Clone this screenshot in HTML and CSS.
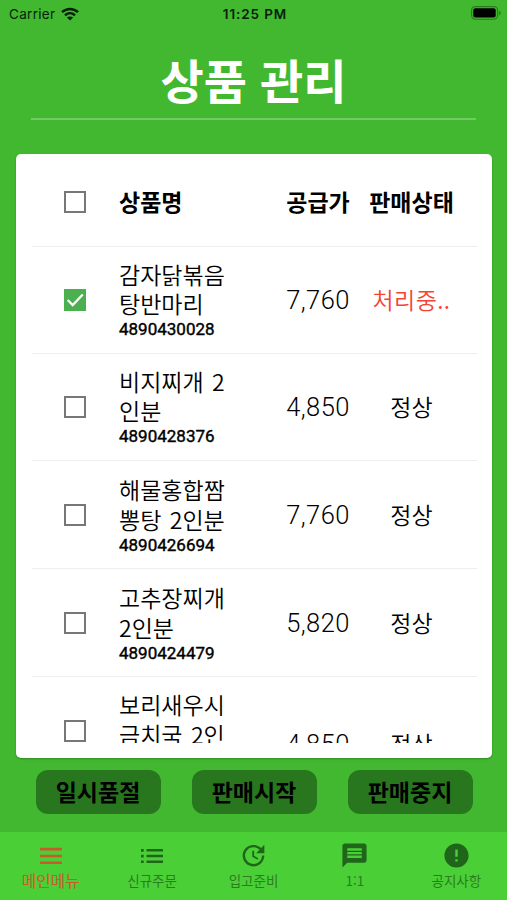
FILE: index.html
```html
<!DOCTYPE html>
<html lang="ko">
<head>
    <meta charset="UTF-8">
    <meta name="viewport" content="width=device-width, initial-scale=1.0">
    <title>상품 관리</title>
    <link rel="stylesheet" href="styles.css">
</head>
<body>
    <div class="status-bar">
        <div class="carrier">
            <span>Carrier</span>
            <svg class="wifi" viewBox="0 0 18 14" fill="none" stroke="#06210a" stroke-width="2.5">
                <path d="M1 5.1C5.6.8 12.4.8 17 5.1"/>
                <path d="M4 8.3c2.9-2.7 7.1-2.7 10 0"/>
                <path d="M9 13.6L5.9 10.6c1.8-1.6 4.4-1.6 6.2 0z" fill="#06210a" stroke="none"/>
            </svg>
        </div>
        <div class="time">11:25 PM</div>
        <svg class="battery" viewBox="0 0 30 14">
            <rect x=".6" y=".6" width="26" height="12.6" rx="3.6" fill="none" stroke="#2a7a20" stroke-width="1.1"/>
            <rect x="2.3" y="2.3" width="22.4" height="9.2" rx="2" fill="#000"/>
            <path d="M28 4.8c2.2.8 2.2 3.6 0 4.4z" fill="#2a7a20"/>
        </svg>
    </div>

    <h1 class="title">상품 관리</h1>

    <div class="card">
        <div class="list">
            <div class="row header">
                <span class="checkbox"></span>
                <div>상품명</div>
                <div class="price">공급가</div>
                <div class="state">판매상태</div>
            </div>
            <div class="row">
                <span class="checkbox checked">
                    <svg viewBox="0 0 24 24"><path d="M4 12l5.5 5.5L20.5 6" fill="none" stroke="#fff" stroke-width="2.5"/></svg>
                </span>
                <div class="name">감자닭볶음<br>탕반마리<small>4890430028</small></div>
                <div class="price">7,760</div>
                <div class="state pending">처리중..</div>
            </div>
            <div class="row">
                <span class="checkbox"></span>
                <div class="name">비지찌개 2<br>인분<small>4890428376</small></div>
                <div class="price">4,850</div>
                <div class="state">정상</div>
            </div>
            <div class="row tall">
                <span class="checkbox"></span>
                <div class="name">해물홍합짬<br>뽕탕 2인분<small>4890426694</small></div>
                <div class="price">7,760</div>
                <div class="state">정상</div>
            </div>
            <div class="row tall">
                <span class="checkbox"></span>
                <div class="name">고추장찌개<br>2인분<small>4890424479</small></div>
                <div class="price">5,820</div>
                <div class="state">정상</div>
            </div>
            <div class="row tall last">
                <span class="checkbox"></span>
                <div class="name">보리새우시<br>금치국 2인</div>
                <div class="price">4,850</div>
                <div class="state">정상</div>
            </div>
        </div>
    </div>

    <div class="actions">
        <button>일시품절</button>
        <button>판매시작</button>
        <button>판매중지</button>
    </div>

    <nav class="tabs">
        <a class="tab active">
            <svg viewBox="0 0 24 24"><path d="M1 3.8h22v2.7H1zM1 10.7h22v2.6H1zM1 17.4h22v2.7H1z"/></svg>
            <span>메인메뉴</span>
        </a>
        <a class="tab">
            <svg viewBox="0 0 24 24"><path d="M1 5h2.7v2.7H1zM1 10.7h2.7v2.7H1zM1 16.4h2.7v2.7H1zM6.5 5H23v2.6H6.5zM6.5 10.7H23v2.6H6.5zM6.5 16.4H23V19H6.5z"/></svg>
            <span>신규주문</span>
        </a>
        <a class="tab">
            <svg class="big" viewBox="0 0 24 24"><path d="M21 10.12h-6.78l2.74-2.82c-2.73-2.7-7.15-2.8-9.88-.1-2.73 2.71-2.73 7.08 0 9.79s7.15 2.71 9.88 0C18.32 15.65 19 14.08 19 12.1h2c0 1.98-.88 4.55-2.64 6.29-3.51 3.48-9.21 3.48-12.72 0-3.5-3.47-3.53-9.11-.02-12.58s9.14-3.47 12.65 0L21 3v7.12zM12.5 8v4.25l3.5 2.08-.72 1.21L11 13V8h1.5z"/></svg>
            <span>입고준비</span>
        </a>
        <a class="tab">
            <svg class="big" viewBox="0 0 24 24"><path d="M20 2H4c-1.1 0-1.99.9-1.99 2L2 22l4-4h14c1.1 0 2-.9 2-2V4c0-1.1-.9-2-2-2zm-2 12H6v-2h12v2zm0-3H6V9h12v2zm0-3H6V6h12v2z"/></svg>
            <span>1:1</span>
        </a>
        <a class="tab">
            <svg class="big" viewBox="0 0 24 24"><path d="M12 2C6.48 2 2 6.48 2 12s4.48 10 10 10 10-4.48 10-10S17.52 2 12 2zm1 15h-2v-2h2v2zm0-4h-2V7h2v6z"/></svg>
            <span>공지사항</span>
        </a>
    </nav>
</body>
</html>
```

FILE: styles.css
```css
* {
    margin: 0;
    padding: 0;
    box-sizing: border-box;
}

body {
    font-family: "Noto Sans CJK KR", sans-serif;
    background: #42b830;
    width: 507px;
    height: 900px;
    overflow: hidden;
    display: flex;
    flex-direction: column;
    color: #000;
}

.status-bar {
    height: 27px;
    padding: 0 6px 0 9px;
    display: grid;
    grid-template-columns: 1fr auto 1fr;
    align-items: center;
    font-family: Inter, sans-serif;
    font-size: 13.5px;
    color: #06210a;
}

.carrier {
    display: flex;
    align-items: center;
    gap: 6px;
    letter-spacing: 0.3px;
}

.wifi {
    width: 18px;
    height: 14px;
}

.time {
    font-weight: 600;
    letter-spacing: 0.9px;
}

.battery {
    width: 30px;
    height: 14px;
    justify-self: end;
    margin-top: -2px;
}

.title {
    height: 93px;
    margin: 0 31px;
    padding-top: 16px;
    border-bottom: 2px solid #72cb65;
    font-size: 47px;
    line-height: 72px;
    text-align: center;
    color: #fff;
}

.card {
    height: 604px;
    margin: 34px 15px 0 16px;
    padding: 0 15px 15px 16px;
    background: #fff;
    border-radius: 5px;
    box-shadow: 0 1px 2px rgba(0, 0, 0, 0.25);
}

.list {
    height: 589px;
    overflow: hidden;
}

.row {
    display: grid;
    grid-template-columns: 55px 159px 80px 107px;
    align-items: center;
    height: 107px;
    padding-left: 32px;
    border-bottom: 1px solid #eee;
    font-size: 23px;
    font-weight: 350;
    line-height: 29px;
    word-spacing: 2px;
}

.row.header {
    height: 93px;
    padding-top: 5px;
    font-weight: 700;
}

.row.tall {
    height: 108px;
    line-height: 30px;
}

.row.last {
    height: 109px;
}

.row.last .name {
    padding-bottom: 24px;
}

.row.last .price,
.row.last .state {
    padding-top: 26px;
}

.checkbox {
    width: 22px;
    height: 22px;
    border: 2px solid #777;
}

.checkbox.checked {
    border: none;
    background: #4caf50;
}

.checkbox svg {
    display: block;
}

.name small {
    display: block;
    font-family: Roboto, sans-serif;
    font-size: 17px;
    font-weight: 400;
    -webkit-text-stroke: 0.4px #000;
    line-height: 22px;
}

.price,
.state {
    text-align: center;
    padding-bottom: 2px;
}

.price {
    font-size: 25.5px;
    font-weight: 300;
    font-family: Roboto, "Noto Sans CJK KR", sans-serif;
    letter-spacing: 0.4px;
    padding-bottom: 0;
}

.header .price {
    font-family: inherit;
    font-size: 23px;
    font-weight: 700;
    letter-spacing: 0;
    padding-bottom: 2px;
}

.row.header .checkbox {
    margin-top: -2px;
}

.row.header div {
    padding-bottom: 3px;
}

.pending {
    color: #f44336;
    letter-spacing: 0.4px;
}

.actions {
    display: flex;
    justify-content: center;
    gap: 31px;
    margin-top: 12px;
    padding-left: 1px;
}

.actions button {
    width: 125px;
    height: 44px;
    padding-bottom: 2px;
    border: none;
    border-radius: 12px;
    background: #28761d;
    font-family: inherit;
    font-size: 23px;
    font-weight: 700;
    line-height: 42px;
}

.tabs {
    display: flex;
    height: 68px;
    margin-top: auto;
    background: #4ad036;
    color: #2b7d20;
}

.tab {
    flex: 1;
    display: flex;
    flex-direction: column;
    align-items: center;
    padding-top: 12px;
    font-size: 13.5px;
    line-height: 25px;
}

.tab svg {
    width: 24px;
    height: 24px;
    fill: #20661a;
}

.tab svg.big {
    width: 29px;
    height: 29px;
    margin: -3px 0 -2px;
}

.tab.active {
    color: #c95a2b;
    font-size: 15.7px;
}

.tab.active svg {
    fill: #c95a2b;
}
```
